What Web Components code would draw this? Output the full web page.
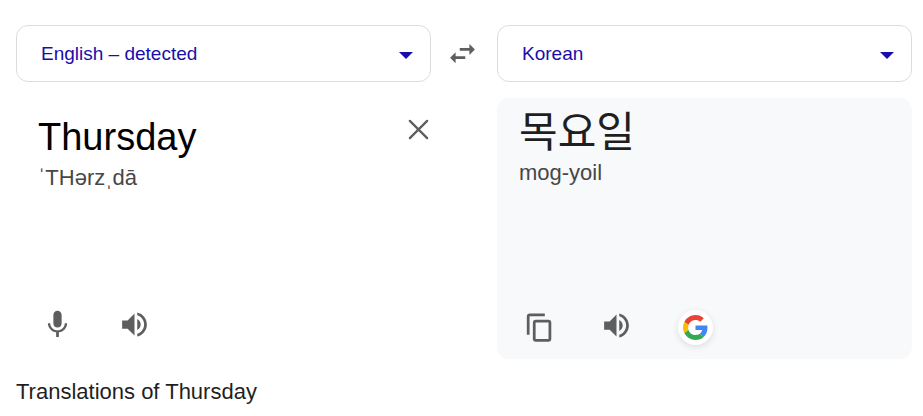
<!DOCTYPE html>
<html lang="en">
<head>
<meta charset="utf-8">
<meta name="viewport" content="width=device-width, initial-scale=1">
<title>Translate</title>
<style>
  body { margin: 0; background: #fff; color: #1f1f1f; font-family: "Liberation Sans", Arial, "Noto Sans CJK KR", sans-serif; }
</style>
</head>
<body>
<translate-card></translate-card>
<script>
const define = (name, html, setup) => {
  const template = document.createElement('template');
  template.innerHTML = html;
  customElements.define(name, class extends HTMLElement {
    constructor() {
      super();
      this.attachShadow({ mode: 'open' }).append(template.content.cloneNode(true));
    }
    connectedCallback() { if (setup) setup(this, this.shadowRoot); }
  });
};

const icons = {
  swap: '<path d="M6.99 11L3 15l3.99 4v-3H14v-2H6.99v-3zM21 9l-3.99-4v3H10v2h7.01v3L21 9z"/>',
  mic: '<path d="M12 14.200c1.660 0 3-1.340 3-3V5c0-1.660-1.340-3-3-3S9 3.340 9 5v6.200c0 1.660 1.340 3 3 3zm5.300-3.200c0 3-2.540 5.100-5.300 5.100S6.700 14 6.700 11H5c0 3.410 2.720 6.230 6 6.720V21h2v-3.280c3.280-.480 6-3.300 6-6.720h-1.700z"/>',
  volume: '<path d="M3 9v6h4l5 5V4L7 9H3zm13.500 3c0-1.770-1.020-3.290-2.500-4.030v8.050c1.480-.730 2.500-2.250 2.500-4.020zM14 3.230v2.060c2.890.860 5 3.540 5 6.710s-2.110 5.850-5 6.710v2.060c4.010-.910 7-4.490 7-8.770s-2.990-7.860-7-8.770z"/>',
  copy: '<g fill="none" stroke="currentColor" stroke-width="2"><path d="M16.600 2.900H5.700Q4.500 2.900 4.500 4.100V17.200"/><rect x="8.900" y="7.300" width="11.400" height="14.100" rx="1.200"/></g>',
  close: '<path d="M3.700 3.700l16.600 16.600M20.300 3.700L3.700 20.300" fill="none" stroke="currentColor" stroke-width="2.200" stroke-linecap="round"/>'
};

define('icon-button', `
  <style>
    :host { display: block; color: #5e5e5e; }
    button { display: block; padding: 0; border: 0; background: none; color: inherit; cursor: pointer; }
    svg { display: block; width: var(--icon-size, 33px); height: var(--icon-size, 33px); fill: currentColor; }
  </style>
  <button type="button"><svg viewBox="0 0 24 24" aria-hidden="true"></svg></button>`,
  (el, root) => {
    root.querySelector('svg').innerHTML = icons[el.getAttribute('icon')];
    root.querySelector('button').setAttribute('aria-label', el.getAttribute('label'));
  });

define('search-button', `
  <style>
    :host { display: block; }
    button { display: grid; place-items: center; width: 35px; height: 35px; padding: 0; border: 0; border-radius: 50%; background: #fff; box-shadow: 0 2px 6px rgba(60, 64, 67, .14); cursor: pointer; }
    svg { display: block; width: 25px; height: 25px; }
  </style>
  <button type="button" aria-label="Search with Google">
    <svg viewBox="0 0 48 48" aria-hidden="true">
      <path fill="#ea4335" d="M24 9.500c3.540 0 6.710 1.220 9.210 3.600l6.850-6.850C35.900 2.380 30.470 0 24 0 14.620 0 6.510 5.380 2.560 13.220l7.980 6.190C12.430 13.720 17.740 9.500 24 9.500z"/>
      <path fill="#4285f4" d="M46.980 24.550c0-1.570-.150-3.090-.380-4.550H24v9.020h12.940c-.580 2.960-2.260 5.480-4.780 7.180l7.730 6c4.510-4.180 7.090-10.360 7.090-17.650z"/>
      <path fill="#fbbc05" d="M10.530 28.590c-.480-1.450-.760-2.990-.760-4.590s.270-3.140.760-4.590l-7.980-6.190C.920 16.460 0 20.120 0 24s.920 7.540 2.560 10.780z"/>
      <path fill="#34a853" d="M24 48c6.480 0 11.930-2.130 15.890-5.810l-7.730-6c-2.150 1.450-4.920 2.300-8.160 2.300-6.260 0-11.570-4.220-13.470-9.910l-7.980 6.190C6.510 42.620 14.620 48 24 48z"/>
    </svg>
  </button>`);

define('language-select', `
  <style>
    :host { display: grid; color: #1a0dab; }
    select, svg { grid-area: 1 / 1; }
    select { appearance: none; box-sizing: border-box; width: 100%; height: 57px; margin: 0; padding: 0 48px 0 24px; border: 1px solid #dadce0; border-radius: 12px; background: #fff; color: inherit; font: 19px "Liberation Sans", Arial, sans-serif; cursor: pointer; }
    svg { place-self: center end; width: 14px; height: 7px; margin: 4px 18px 0 0; fill: currentColor; pointer-events: none; }
  </style>
  <select><option></option></select>
  <svg viewBox="0 0 14 7" aria-hidden="true"><path d="M0 0h14L7 7z"/></svg>`,
  (el, root) => {
    root.querySelector('option').textContent = el.getAttribute('value');
    root.querySelector('select').setAttribute('aria-label', el.getAttribute('label'));
  });

define('source-panel', `
  <style>
    :host { display: flex; flex-direction: column; min-height: 261px; box-sizing: border-box; padding: 17px 0 18px 22px; }
    .entry { display: flex; align-items: flex-start; gap: 16px; }
    .words { flex: 1; min-width: 0; }
    textarea { display: block; box-sizing: border-box; width: 100%; height: 44px; margin: 0; padding: 0; border: 0; outline: 0; resize: none; overflow: hidden; background: none; color: #000; font: 38px/44px "Liberation Sans", Arial, sans-serif; }
    .sound { color: #474747; font-size: 22px; line-height: 28px; padding-top: 5px; }
    .tools { display: flex; gap: 44px; margin-top: auto; padding-left: 3px; }
    .clear { --icon-size: 25px; margin-top: 2px; }
  </style>
  <div class="entry">
    <div class="words">
      <textarea rows="1" aria-label="Source text" spellcheck="false">Thursday</textarea>
      <div class="sound">ˈTHərzˌdā</div>
    </div>
    <icon-button class="clear" icon="close" label="Clear text"></icon-button>
  </div>
  <div class="tools">
    <icon-button icon="mic" label="Speak"></icon-button>
    <icon-button icon="volume" label="Listen to source"></icon-button>
  </div>`);

define('target-panel', `
  <style>
    :host { display: flex; flex-direction: column; min-height: 261px; box-sizing: border-box; padding: 12px 22px 13px; border-radius: 12px; background: #f7f9fb; }
    .result { font: 42px/46px "Liberation Sans", Arial, "Noto Sans CJK KR", sans-serif; }
    .sound { color: #474747; font-size: 22px; line-height: 28px; padding-top: 3px; }
    .tools { display: flex; align-items: center; gap: 45px; margin-top: auto; padding-left: 3px; }
    .listen { margin-bottom: 4px; }
  </style>
  <div class="result" lang="ko">목요일</div>
  <div class="sound">mog-yoil</div>
  <div class="tools">
    <icon-button icon="copy" label="Copy translation"></icon-button>
    <icon-button class="listen" icon="volume" label="Listen to translation"></icon-button>
    <search-button></search-button>
  </div>`);

define('translate-card', `
  <style>
    :host { display: block; padding: 25px 11px 8px 16px; }
    .grid { display: grid; grid-template-columns: minmax(0, 1fr) 66px minmax(0, 1fr); row-gap: 16px; align-items: center; }
    .grid > icon-button { justify-self: center; padding-right: 4px; }
    target-panel { grid-column: 3; }
    h2 { margin: 19px 0 0; font-size: 22px; line-height: 28px; font-weight: 400; }
  </style>
  <div class="grid">
    <language-select value="English – detected" label="Source language"></language-select>
    <icon-button icon="swap" label="Swap languages"></icon-button>
    <language-select value="Korean" label="Target language"></language-select>
    <source-panel></source-panel>
    <target-panel></target-panel>
  </div>
  <h2>Translations of Thursday</h2>`);
</script>
</body>
</html>
